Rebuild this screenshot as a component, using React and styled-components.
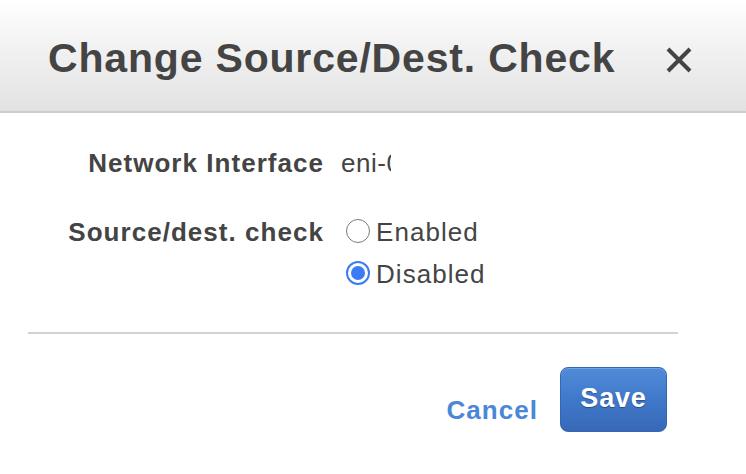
import React from "react";
import styled, { createGlobalStyle } from "styled-components";

const Global = createGlobalStyle`
  html, body { margin: 0; padding: 0; background: #fff; }
  body { font-family: "Liberation Sans", Arial, Helvetica, sans-serif; color: #444; }
`;

const Dialog = styled.div`
  width: 746px;
  height: 474px;
  background: #fff;
  overflow: hidden;
`;

const Header = styled.div`
  height: 113px;
  box-sizing: border-box;
  display: flex;
  align-items: center;
  justify-content: space-between;
  padding: 0 54px 0 48px;
  background: linear-gradient(to bottom, #ffffff 0%, #f1f1f1 45%, #e2e2e2 100%);
  border-bottom: 2px solid #cdcdcd;
`;

const Title = styled.h1`
  margin: 0;
  font-size: 41px;
  font-weight: 700;
  letter-spacing: 0.02em;
  color: #444;
  line-height: 1;
  padding-top: 6px;
`;

const Close = styled.button`
  border: 0;
  background: none;
  padding: 0;
  width: 26px;
  height: 26px;
  cursor: pointer;
  display: flex;
  margin-top: 8px;
`;

const Body = styled.div`
  padding: 29px 68px 0 28px;
`;

const Form = styled.div`
  display: grid;
  grid-template-columns: 296px 1fr;
  column-gap: 22px;
  row-gap: 27px;
  align-items: start;
`;

const Label = styled.div`
  text-align: right;
  font-size: 26px;
  font-weight: 700;
  letter-spacing: 0.04em;
  line-height: 42px;
  color: #444;
`;

const Value = styled.div`
  font-size: 26px;
  letter-spacing: 0.02em;
  line-height: 42px;
  width: 50px;
  margin-left: -5px;
  white-space: nowrap;
  overflow: hidden;
  color: #444;
`;

const RadioList = styled.div`
  display: flex;
  flex-direction: column;
`;

const RadioRow = styled.label`
  display: flex;
  align-items: center;
  height: 42px;
  font-size: 26px;
  letter-spacing: 0.04em;
  color: #444;
  gap: 6px;
`;

const Circle = styled.span`
  width: 24px;
  height: 24px;
  box-sizing: border-box;
  border-radius: 50%;
  border: ${(p) => (p.$checked ? "2.5px solid #3b7cf5" : "1.5px solid #7a7a7a")};
  background: #fff;
  display: flex;
  align-items: center;
  justify-content: center;
  margin-top: -2px;
  &::after {
    content: "";
    width: 14px;
    height: 14px;
    border-radius: 50%;
    background: #3b7cf5;
    display: ${(p) => (p.$checked ? "block" : "none")};
  }
`;

const Divider = styled.hr`
  margin: 37px 0 0 0;
  border: 0;
  height: 2px;
  background: #d2d2d2;
`;

const Footer = styled.div`
  display: flex;
  justify-content: flex-end;
  align-items: flex-end;
  gap: 22px;
  margin-top: 33px;
  padding-right: 11px;
`;

const CancelLink = styled.a`
  font-size: 26px;
  font-weight: 700;
  letter-spacing: 0.04em;
  color: #4a87d9;
  text-decoration: none;
  line-height: 1;
  margin-bottom: 9px;
  cursor: pointer;
`;

const SaveButton = styled.button`
  width: 107px;
  height: 65px;
  box-sizing: border-box;
  border: 1.5px solid #3566b4;
  border-radius: 8px;
  background: linear-gradient(to bottom, #4f8bd9 0%, #3f77c8 55%, #3868b8 100%);
  color: #fff;
  font-family: "Liberation Sans", Arial, sans-serif;
  font-size: 27px;
  font-weight: 700;
  letter-spacing: 0.03em;
  text-shadow: 0 1px 1px rgba(0, 0, 0, 0.35);
  box-shadow: inset 0 1px 0 rgba(255, 255, 255, 0.2);
  padding: 0 0 2px 0;
  cursor: pointer;
`;

export default function App() {
  return (
    <Dialog>
      <Global />
      <Header>
        <Title>Change Source/Dest. Check</Title>
        <Close aria-label="Close">
          <svg width="26" height="26" viewBox="0 0 26 26">
            <path d="M2 2 L24 24 M24 2 L2 24" stroke="#444" strokeWidth="4" strokeLinecap="butt" />
          </svg>
        </Close>
      </Header>
      <Body>
        <Form>
          <Label>Network Interface</Label>
          <Value>eni-0a3f9c2d7e5b1</Value>
          <Label>Source/dest. check</Label>
          <RadioList>
            <RadioRow>
              <Circle />
              Enabled
            </RadioRow>
            <RadioRow>
              <Circle $checked />
              Disabled
            </RadioRow>
          </RadioList>
        </Form>
        <Divider />
        <Footer>
          <CancelLink>Cancel</CancelLink>
          <SaveButton>Save</SaveButton>
        </Footer>
      </Body>
    </Dialog>
  );
}
